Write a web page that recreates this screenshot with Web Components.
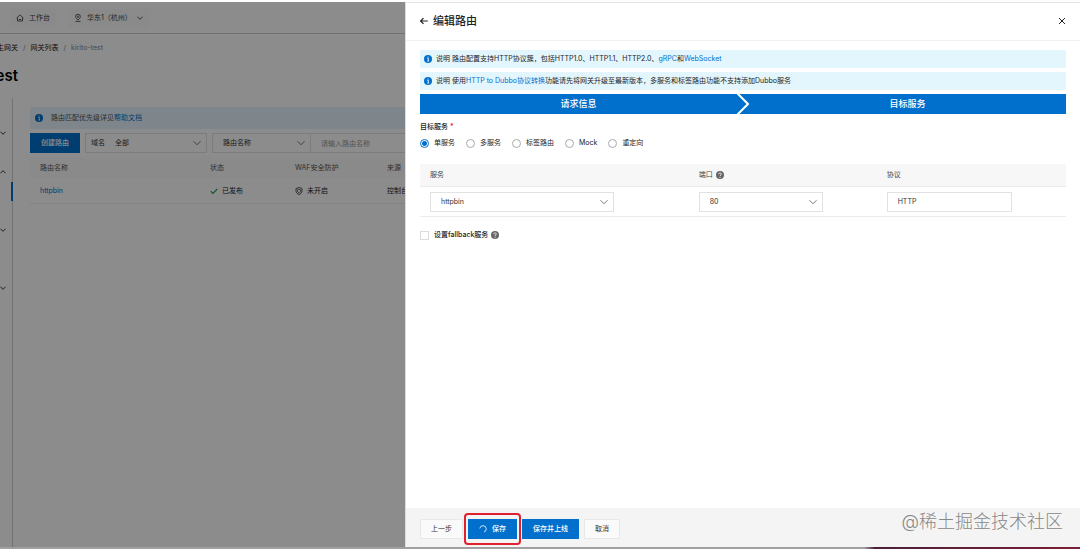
<!DOCTYPE html>
<html lang="zh-CN">
<head>
<meta charset="utf-8">
<title>编辑路由</title>
<style>
  html, body { height: 100%; }
  body {
    margin: 0;
    font: 7px/12px Inter, "Noto Sans CJK SC", sans-serif;
    color: #222;
    background: #fff;
  }
</style>
</head>
<body>
<gateway-app></gateway-app>

<script>
const define = (name, html, Base = HTMLElement) => {
  const template = document.createElement('template')
  template.innerHTML = html
  customElements.define(name, class extends Base {
    constructor() {
      super()
      this.attachShadow({ mode: 'open' })
      this.shadowRoot.appendChild(template.content.cloneNode(true))
    }
  })
}

const icons = {
  info: '<circle cx="8" cy="8" r="8" fill="#0070cc"/><path d="M6.4 6.8h2.4v5M6.2 12h4" stroke="#fff" stroke-width="1.6" fill="none"/><circle cx="8" cy="4" r="1.2" fill="#fff"/>',
  help: '<circle cx="8" cy="8" r="8" fill="#666"/><path d="M5.4 6.4c0-3.4 5.2-3.4 5.2-.2 0 1.9-2.6 1.8-2.6 4" stroke="#fff" stroke-width="1.7" fill="none"/><circle cx="8" cy="12.4" r="1.1" fill="#fff"/>',
  down: '<path d="M1 4.5l7 7 7-7" fill="none" stroke="currentColor" stroke-width="var(--stroke, 1.8)"/>',
  up: '<path d="M1 11.5l7-7 7 7" fill="none" stroke="currentColor" stroke-width="var(--stroke, 1.8)"/>',
  back: '<path d="M15.5 8H1.5M7 2.2L1.3 8 7 13.8" fill="none" stroke="currentColor" stroke-width="2.4"/>',
  close: '<path d="M2 2l12 12M14 2L2 14" fill="none" stroke="currentColor" stroke-width="2"/>',
  home: '<path d="M1 8.2L8 1.8l7 6.4M3 7v7h10V7M5.5 11h5" fill="none" stroke="currentColor" stroke-width="1.7"/>',
  pin: '<path d="M8 12C4.6 9 3.2 7.4 3.2 5.3a4.8 4.8 0 0 1 9.6 0C12.8 7.4 11.4 9 8 12zM3 14.8h10" fill="none" stroke="currentColor" stroke-width="1.7"/><circle cx="8" cy="5.4" r="1.6" fill="none" stroke="currentColor" stroke-width="1.5"/>',
  check: '<path d="M1.5 8.5l4.3 4.3L14.5 4" fill="none" stroke="#1e9e4e" stroke-width="2.2"/>',
  shield: '<path d="M8 1l6 2v5c0 3.5-2.5 5.8-6 7-3.5-1.2-6-3.500-6-7V3z" fill="none" stroke="currentColor" stroke-width="1.5"/><path d="M8 4.500l3 1v2.500c0 2-1.200 3-3 3.800-1.800-.8-3-1.800-3-3.800V5.500z" fill="none" stroke="currentColor" stroke-width="1.3"/>',
  sort: '<path d="M8 2l4 5H4zM8 14l4-5H4z" fill="#999"/>',
  spin: '<path d="M8 1.5A6.5 6.5 0 1 1 2.4 11" fill="none" stroke="#fff" stroke-width="1.5" transform="rotate(-80 8 8)"/>'
}

customElements.define('ui-icon', class extends HTMLElement {
  constructor() {
    super()
    this.attachShadow({ mode: 'open' })
  }
  connectedCallback() {
    this.shadowRoot.innerHTML = /* html */ `
      <style>
        :host { display: inline-flex; flex: none; width: var(--size, 8px); height: var(--size, 8px); }
        svg { width: 100%; height: 100%; display: block; }
      </style>
      <svg viewBox="0 0 16 16" aria-hidden="true">${icons[this.getAttribute('name')]}</svg>`
  }
})

define('ui-notice', /* html */ `
<style>
  :host {
    display: flex;
    align-items: center;
    gap: var(--notice-gap, 4px);
    padding: 3px 4px;
    border-radius: 2px;
    background: #e4f6fd;
    color: #222;
  }
</style>
<ui-icon name="info"></ui-icon>
<span><slot></slot></span>
`)

// drop-down with its own arrow laid over the right end
customElements.define('ui-select', class extends HTMLElement {
  constructor() {
    super()
    this.attachShadow({ mode: 'open' })
  }
  connectedCallback() {
    const prefix = this.getAttribute('prefix')
    this.shadowRoot.innerHTML = /* html */ `
      <style>
        :host { display: block; color: #333; }
        label {
          display: grid;
          grid-template-columns: auto 1fr;
          align-items: center;
          box-sizing: border-box;
          height: 20px;
          border: 1px solid #e2e2e2;
          background: #fff;
        }
        span { padding-left: 5px; color: #333; }
        select {
          grid-area: 1 / 2;
          width: 100%;
          height: 18px;
          padding: 0 20px 0 10px;
          border: 0;
          font: inherit;
          color: inherit;
          background: none;
          appearance: none;
        }
        ui-icon { grid-area: 1 / 2; justify-self: end; margin-right: 5px; pointer-events: none; color: #666; }
      </style>
      <label>
        ${prefix ? `<span>${prefix}</span>` : ''}
        <select aria-label="${this.getAttribute('label')}"><option>${this.getAttribute('value')}</option></select>
        <ui-icon name="down"></ui-icon>
      </label>`
  }
})

customElements.define('ui-button', class extends HTMLElement {
  constructor() {
    super()
    this.attachShadow({ mode: 'open' })
    this.shadowRoot.innerHTML = /* html */ `
      <style>
        :host { display: block; }
        button {
          display: flex;
          align-items: center;
          gap: 5px;
          height: 20px;
          padding: 0 10px;
          border: 1px solid #e8e8e8;
          font: inherit;
          color: #333;
          background: #fafafa;
          white-space: nowrap;
        }
        :host([primary]) button { color: #fff; border-color: #0070cc; background: #0070cc; font-weight: 500; }
      </style>
      <button type="button"><slot></slot></button>`
  }
})

define('side-menu', /* html */ `
<style>
  :host { display: block; box-sizing: border-box; width: 13px; border-right: 1px solid #d0d0d0; padding-top: 25px; }
  button { display: flex; align-items: center; width: 100%; height: 20px; padding: 0; border: 0; background: none; color: #222; }
  ui-icon { --size: 6px; --stroke: 2.4; }
  ul { margin: 0; padding: 0; list-style: none; }
  li { height: 19px; }
  .active { border-right: 2px solid #0070cc; margin-right: -1px; }
</style>
<nav>
  <button type="button" aria-label="展开"><ui-icon name="down"></ui-icon></button>
  <ul><li></li></ul>
  <button type="button" aria-label="收起"><ui-icon name="up"></ui-icon></button>
  <ul><li class="active"></li><li></li></ul>
  <button type="button" aria-label="展开"><ui-icon name="down"></ui-icon></button>
  <ul><li></li><li></li></ul>
  <button type="button" aria-label="展开"><ui-icon name="down"></ui-icon></button>
</nav>
`)

define('route-list', /* html */ `
<style>
  :host { display: block; padding: 9px 0 0 17px; min-width: 0; }
  ui-notice { --notice-gap: 8px; padding: 5px; background: #e6f4ff; color: #555; }
  a { color: #0070cc; text-decoration: none; }
  .filters { display: flex; gap: 5px; margin: 4px 0; }
  .domain { flex: none; width: 122px; }
  .field { flex: none; width: 99px; }
  .search { display: flex; flex: 1; }
  input {
    flex: 1;
    box-sizing: border-box;
    height: 20px;
    padding: 0 10px;
    border: 1px solid #e2e2e2;
    border-left: 0;
    font: inherit;
    background: #fff;
  }
  input::placeholder { color: #999; }
  table { width: 100%; table-layout: fixed; border-collapse: collapse; }
  th, td { padding: 0 10px; text-align: left; font-weight: 400; }
  th { height: 21px; background: #fbfbfb; color: #555; }
  td { height: 25px; border-bottom: 1px solid #f0f0f0; }
  th:nth-child(1) { width: 150px; }
  th:nth-child(2) { width: 65px; }
  th:nth-child(3) { width: 72px; }
  .cell { display: flex; align-items: center; gap: 4px; }
</style>
<ui-notice>路由匹配优先级详见<a href="#">帮助文档</a></ui-notice>
<div class="filters">
  <ui-button primary>创建路由</ui-button>
  <ui-select class="domain" prefix="域名" label="域名" value="全部"></ui-select>
  <div class="search">
    <ui-select class="field" label="查询字段" value="路由名称"></ui-select>
    <input type="text" placeholder="请输入路由名称" aria-label="路由名称">
  </div>
</div>
<table>
  <thead>
    <tr><th>路由名称</th><th>状态</th><th>WAF安全防护</th><th><div class="cell">来源<ui-icon name="sort"></ui-icon></div></th></tr>
  </thead>
  <tbody>
    <tr>
      <td><a href="#">httpbin</a></td>
      <td><div class="cell"><ui-icon name="check"></ui-icon>已发布</div></td>
      <td><div class="cell"><ui-icon name="shield"></ui-icon>未开启</div></td>
      <td>控制台</td>
    </tr>
  </tbody>
</table>
`)

define('console-page', /* html */ `
<style>
  :host { display: flex; flex-direction: column; height: 100%; overflow: hidden; }
  header { display: flex; align-items: center; gap: 12px; height: 31px; padding-left: 10px; border-bottom: 1px solid #ccc; }
  header button {
    display: flex;
    align-items: center;
    gap: 5px;
    height: 18px;
    padding: 0 6px;
    border: 0;
    border-radius: 2px;
    font: inherit;
    color: #444;
    background: #fbfbfb;
  }
  header ui-icon[name=down] { --size: 6px; --stroke: 2.4; }
  .crumbs { display: flex; gap: 5px; margin-top: 8px; color: #888; }
  .crumbs a { color: #222; text-decoration: none; }
  /* scrolled sideways: only the end of the text is in view */
  .crumbs .tail, .tail { display: flex; justify-content: flex-end; width: 18px; overflow: hidden; white-space: nowrap; }
  h1 { margin: 12px 0; font-size: 15px; line-height: 20px; font-weight: 600; color: #000; }
  .body { display: grid; grid-template-columns: auto 1fr; flex: 1; }
</style>
<header>
  <button type="button"><ui-icon name="home"></ui-icon>工作台</button>
  <button type="button"><ui-icon name="pin"></ui-icon>华东1（杭州）<ui-icon name="down"></ui-icon></button>
</header>
<div class="crumbs">
  <a class="tail" href="#">生网关</a><span>/</span><a href="#">网关列表</a><span>/</span><span>kirito-test</span>
</div>
<h1 class="tail">est</h1>
<div class="body">
  <side-menu></side-menu>
  <route-list></route-list>
</div>
`)

define('step-bar', /* html */ `
<style>
  :host { display: flex; height: 20px; background: #0070cc; color: #fff; font-size: 9px; font-weight: 500; line-height: 20px; }
  ::slotted(*) { flex: 1; text-align: center; }
  svg { order: 1; width: 12px; height: 20px; }
  ::slotted([slot=next]) { order: 2; }
</style>
<slot></slot>
<svg viewBox="0 0 12 20" aria-hidden="true"><path d="M0-1L11 10 0 21" fill="none" stroke="#fff" stroke-width="2"/></svg>
<slot name="next"></slot>
`)

define('route-form', /* html */ `
<style>
  :host { display: block; padding: 9px 14px; }
  a { color: #0070cc; text-decoration: none; }
  ui-notice + ui-notice, step-bar { margin-top: 4px; }
  fieldset { margin: 7px 0 0; padding: 0; border: 0; }
  legend { padding: 0; font-weight: 500; }
  legend i { color: #e00; font-style: normal; }
  .radios { display: flex; gap: 11px; margin-top: 4px; }
  label { display: flex; align-items: center; gap: 5px; }
  input { font: inherit; }
  input[type=radio], input[type=checkbox] {
    width: 9px;
    height: 9px;
    margin: 0;
    border: 1px solid #aaa;
    background: #fff;
    appearance: none;
  }
  input[type=radio] { border-radius: 50%; }
  input[type=radio]:checked { border-color: #0070cc; background: radial-gradient(#0070cc 0 2px, #fff 3px); }
  input[type=checkbox] { border-color: #dcdcdc; }
  table { width: 100%; margin-top: 15px; table-layout: fixed; border-collapse: collapse; }
  th, td { padding: 0 10px; border-bottom: 1px solid #ebebeb; text-align: left; }
  th { height: 22px; background: #f7f7f7; font-weight: 400; color: #444; }
  td { height: 29px; }
  th:nth-child(1) { width: 38.5%; }
  th:nth-child(2) { width: 26%; }
  .head { display: flex; align-items: center; gap: 3px; }
  ui-select, td input { box-sizing: border-box; width: 74%; }
  td input { display: block; height: 20px; padding: 0 10px; border: 1px solid #e2e2e2; color: #333; background: #fff; }
  .fallback { display: flex; align-items: center; gap: 3px; margin-top: 12px; font-weight: 500; }
</style>
<ui-notice>说明 路由配置支持HTTP协议簇，包括HTTP1.0、HTTP1.1、HTTP2.0、<a href="#">gRPC</a>和<a href="#">WebSocket</a></ui-notice>
<ui-notice>说明 使用<a href="#">HTTP to Dubbo协议转换</a>功能请先将网关升级至最新版本，多服务和标签路由功能不支持添加Dubbo服务</ui-notice>
<step-bar><span>请求信息</span><span slot="next">目标服务</span></step-bar>
<fieldset>
  <legend>目标服务 <i>*</i></legend>
  <div class="radios">
    <label><input type="radio" name="target" checked>单服务</label>
    <label><input type="radio" name="target">多服务</label>
    <label><input type="radio" name="target">标签路由</label>
    <label><input type="radio" name="target">Mock</label>
    <label><input type="radio" name="target">重定向</label>
  </div>
</fieldset>
<table>
  <thead>
    <tr><th>服务</th><th><div class="head">端口<ui-icon name="help"></ui-icon></div></th><th>协议</th></tr>
  </thead>
  <tbody>
    <tr>
      <td><ui-select label="服务" value="httpbin"></ui-select></td>
      <td><ui-select label="端口" value="80"></ui-select></td>
      <td><input type="text" value="HTTP" aria-label="协议"></td>
    </tr>
  </tbody>
</table>
<div class="fallback">
  <label><input type="checkbox">设置fallback服务</label>
  <ui-icon name="help"></ui-icon>
</div>
`)

define('route-drawer', /* html */ `
<style>
  :host { display: flex; flex-direction: column; background: #fff; border-left: 1px solid #ddd; box-sizing: border-box; }
  header { display: flex; align-items: center; gap: 5px; height: 38px; padding: 0 14px; border-bottom: 1px solid #f2f2f2; }
  h2 { flex: 1; margin: 0; font-size: 11px; line-height: 16px; font-weight: 500; color: #222; }
  header button { display: flex; padding: 0; border: 0; background: none; color: #222; }
  route-form { flex: 1; }
  footer { display: flex; align-items: center; gap: 5px; height: 37px; padding: 2px 14px 0; background: #f4f4f4; }
  .saving { position: relative; }
  .saving::after {
    content: '';
    position: absolute;
    inset: -6px -4px;
    border: 2px solid #e0212f;
    border-radius: 4px;
    pointer-events: none;
  }
</style>
<header>
  <button type="button" aria-label="返回"><ui-icon name="back"></ui-icon></button>
  <h2>编辑路由</h2>
  <button type="button" aria-label="关闭"><ui-icon name="close"></ui-icon></button>
</header>
<route-form></route-form>
<footer>
  <ui-button>上一步</ui-button>
  <ui-button class="saving" primary><ui-icon name="spin"></ui-icon>保存</ui-button>
  <ui-button primary>保存并上线</ui-button>
  <ui-button>取消</ui-button>
</footer>
`)

define('gateway-app', /* html */ `
<style>
  :host { display: flex; flex-direction: column; min-height: 100vh; }
  main { position: relative; flex: 1; margin-top: 2px; display: grid; overflow: hidden; }
  .mask { position: absolute; inset: 0; background: rgba(0, 0, 0, .45); }
  route-drawer { position: absolute; inset: 0 0 0 auto; width: 62.5%; border-top: 1px solid #e4e4e4; }
  route-drawer { border-top: 0; box-shadow: inset 0 1px #e4e4e4; }
  .mark { position: absolute; right: 17px; bottom: 13px; font-size: 18px; line-height: 24px; font-weight: 300; color: #888; }
  .edge { height: 2px; background: linear-gradient(90deg, #a0a0a0 80%, #4a2036 81%, #7c1f38); }
</style>
<main>
  <console-page></console-page>
  <div class="mask"></div>
  <route-drawer></route-drawer>
  <div class="mark">@稀土掘金技术社区</div>
</main>
<div class="edge"></div>
`)
</script>
</body>
</html>
